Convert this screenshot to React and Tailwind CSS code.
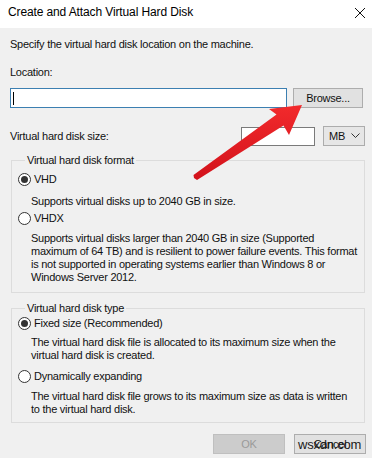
import React from "react";

function Radio({ checked }) {
  return (
    <span className="w-[13px] h-[13px] rounded-full border border-[#333333] bg-white flex items-center justify-center shrink-0">
      {checked && <span className="w-[7px] h-[7px] rounded-full bg-[#333333]" />}
    </span>
  );
}

export default function App() {
  const font = { fontFamily: '"Liberation Sans", Arial, sans-serif' };
  return (
    <div
      className="w-[372px] h-[458px] relative overflow-hidden bg-[#f0f0f0] text-[#111111] text-[11px] leading-[13px] tracking-[-0.25px]"
      style={font}
    >
      {/* Title bar */}
      <div className="h-[28px] bg-white flex items-start justify-between pl-[8px] pr-[5px] pt-[4px]">
        <span className="text-[12px] leading-[17px] tracking-[-0.12px] text-black">
          Create and Attach Virtual Hard Disk
        </span>
        <svg width="12" height="12" viewBox="0 0 12 12" className="mt-[3px] mr-[1px]">
          <path d="M1 1 L11 11 M11 1 L1 11" stroke="#111" strokeWidth="1" fill="none" />
        </svg>
      </div>

      <div className="pl-[10px] pr-[7px]">
        <p className="mt-[10px]">Specify the virtual hard disk location on the machine.</p>
        <p className="mt-[15px]">Location:</p>

        <div className="mt-[9px] flex items-start">
          <div className="flex-1 h-[20px] bg-white border border-[#3c7fb1] flex items-center pl-[2px]">
            <span className="w-px h-[13px] bg-black" />
          </div>
          <div className="ml-[6px] mr-[2px] w-[70px] h-[20px] bg-[#e1e1e1] border border-[#adadad] flex items-center justify-center">
            Browse...
          </div>
        </div>

        <div className="mt-[18px] flex items-center h-[20px]">
          <span className="flex-1">Virtual hard disk size:</span>
          <div className="w-[74px] h-[19px] bg-white border border-[#7a7a7a]" />
          <div className="ml-[8px] w-[42px] h-[20px] bg-[#e6e6e6] border border-[#acacac] flex items-center justify-between pl-[5px] pr-[4px]">
            <span>MB</span>
            <svg width="9" height="6" viewBox="0 0 9 6">
              <path d="M0.5 0.5 L4.5 4.5 L8.5 0.5" stroke="#333" strokeWidth="1" fill="none" />
            </svg>
          </div>
        </div>

        {/* Format group */}
        <fieldset className="mt-[8px] ml-[1px] border border-[#dcdcdc] pl-[6px] pr-[4px] pb-[8px]">
          <legend className="ml-[7px] px-[2px] text-[11px] leading-[13px]">Virtual hard disk format</legend>
          <div className="mt-[6px] flex items-center gap-[3px]">
            <Radio checked />
            <span>VHD</span>
          </div>
          <p className="mt-[9px] ml-[13px]">Supports virtual disks up to 2040 GB in size.</p>
          <div className="mt-[4px] flex items-center gap-[3px]">
            <Radio />
            <span>VHDX</span>
          </div>
          <p className="mt-[7px] ml-[13px]">
            Supports virtual disks larger than 2040 GB in size (Supported
            <br />
            maximum of 64 TB) and is resilient to power failure events. This format
            <br />
            is not supported in operating systems earlier than Windows 8 or
            <br />
            Windows Server 2012.
          </p>
        </fieldset>

        {/* Type group */}
        <fieldset className="mt-[9px] ml-[1px] border border-[#dcdcdc] pl-[6px] pr-[4px] pb-[6px]">
          <legend className="ml-[7px] px-[2px] text-[11px] leading-[13px]">Virtual hard disk type</legend>
          <div className="mt-[2px] flex items-center gap-[3px]">
            <Radio checked />
            <span>Fixed size (Recommended)</span>
          </div>
          <p className="mt-[6px] ml-[13px]">
            The virtual hard disk file is allocated to its maximum size when the
            <br />
            virtual hard disk is created.
          </p>
          <div className="mt-[8px] flex items-center gap-[3px]">
            <Radio />
            <span>Dynamically expanding</span>
          </div>
          <p className="mt-[7px] ml-[13px]">
            The virtual hard disk file grows to its maximum size as data is written
            <br />
            to the virtual hard disk.
          </p>
        </fieldset>

        <div className="mt-[11px] flex justify-end gap-[9px]">
          <div className="w-[72px] h-[20px] bg-[#cccccc] border border-[#bfbfbf] text-[#9a9a9a] flex items-center justify-center">
            OK
          </div>
          <div className="w-[72px] h-[20px] bg-[#e1e1e1] border border-[#adadad] flex items-center justify-center mr-[-1px]">
            Cancel
          </div>
        </div>
      </div>

      {/* Red arrow overlay */}
      <svg className="absolute left-0 top-0 pointer-events-none" width="372" height="458" viewBox="0 0 372 458">
        <defs>
          <linearGradient id="ar" x1="0" y1="0" x2="0" y2="1">
            <stop offset="0" stopColor="#f22a2c" />
            <stop offset="1" stopColor="#d2121b" />
          </linearGradient>
        </defs>
        <polygon
          points="302,105 289,135 283.5,125.5 197,180 194,178 193.5,175 276.5,114.5 269,109"
          fill="url(#ar)"
          strokeLinejoin="round"
        />
      </svg>

      {/* Watermark */}
      <span className="absolute left-[298px] top-[437px] text-[13px] leading-[15px] tracking-[-0.2px] text-[#1a1a1a]">
        wsxdn.com
      </span>
    </div>
  );
}
